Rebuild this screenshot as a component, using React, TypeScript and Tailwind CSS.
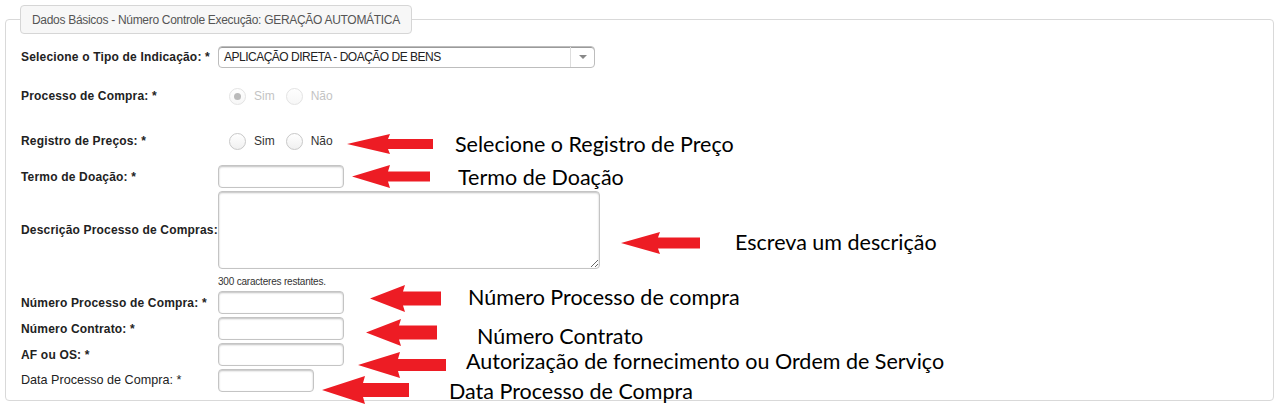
import React from 'react';

type ArrowProps = { className: string; w: number; h: number; head: number; shaft: number };

// red annotation arrow pointing left
function Arrow({ className, w, h, head, shaft }: ArrowProps) {
  const t = (h - shaft) / 2;
  const b = (h + shaft) / 2;
  const pts = `0,${h / 2} ${head},0 ${head - 2},${t} ${w},${t} ${w},${b} ${head - 2},${b} ${head},${h}`;
  return (
    <svg className={`absolute ${className}`} width={w} height={h} viewBox={`0 0 ${w} ${h}`}>
      <polygon points={pts} fill="#ed1c24" />
    </svg>
  );
}

function Radio({ checked, disabled, label }: { checked?: boolean; disabled?: boolean; label: string }) {
  return (
    <span className={`flex items-center ${disabled ? 'opacity-50' : ''}`}>
      <span className="flex h-[17px] w-[17px] items-center justify-center rounded-full border border-[#c8c8c8] bg-gradient-to-b from-white to-[#f0f0f0]">
        {checked && <span className="h-[7px] w-[7px] rounded-full bg-[#777]" />}
      </span>
      <span className={`ml-[8px] ${disabled ? 'text-[#888]' : 'text-[#333]'}`}>{label}</span>
    </span>
  );
}

function TextInput({ w = 'w-[126px]' }: { w?: string }) {
  return (
    <input
      type="text"
      className={`${w} h-[23px] rounded-[4px] border border-[#c4c4c4] bg-white shadow-[inset_0_1px_2px_rgba(0,0,0,0.25)] outline-none`}
    />
  );
}

function Label({ children, bold = true }: { children: React.ReactNode; bold?: boolean }) {
  return (
    <span
      className={`w-[197px] shrink-0 whitespace-nowrap text-[#222] ${
        bold ? 'font-bold tracking-[0.18px]' : 'text-[12.6px]'
      }`}
    >
      {children}
    </span>
  );
}

export default function App() {
  return (
    <div className="relative h-[412px] w-[1283px] bg-white font-['Liberation_Sans',Arial,sans-serif] text-[12px]">
      <div className="px-[5px] pt-[5px]">
        <fieldset className="w-[1269px] rounded-[4px] border border-[#d9d9d9] pb-[8px] pl-[15px] pr-[15px]">
          <legend className="ml-[-1px] h-[29px] rounded-[4px] border border-[#d6d6d6] bg-[#f7f7f7] px-[11px] leading-[29px] tracking-[-0.3px] text-[#555]">
            Dados Básicos - Número Controle Execução: GERAÇÃO AUTOMÁTICA
          </legend>

          <div className="mt-[12px] flex h-[22px] items-center">
            <Label>Selecione o Tipo de Indicação: *</Label>
            <div className="flex h-[22px] w-[377px] items-stretch rounded-[4px] border border-[#bdbdbd] bg-white shadow-[inset_0_1px_0_#9a9a9a]">
              <span className="flex-1 pl-[5px] leading-[21px] tracking-[-0.5px] text-[#222]">
                APLICAÇÃO DIRETA - DOAÇÃO DE BENS
              </span>
              <span className="flex w-[24px] items-center justify-center border-l border-[#ddd]">
                <span className="h-0 w-0 border-x-[4px] border-t-[4px] border-x-transparent border-t-[#888]" />
              </span>
            </div>
          </div>

          <div className="mt-[18px] flex h-[20px] items-center">
            <Label>Processo de Compra: *</Label>
            <div className="ml-[11px] flex items-center gap-[11px]">
              <Radio checked disabled label="Sim" />
              <Radio disabled label="Não" />
            </div>
          </div>

          <div className="mt-[25px] flex h-[20px] items-center">
            <Label>Registro de Preços: *</Label>
            <div className="ml-[11px] flex items-center gap-[11px]">
              <Radio label="Sim" />
              <Radio label="Não" />
            </div>
          </div>

          <div className="mt-[14px] flex h-[23px] items-center">
            <Label>Termo de Doação: *</Label>
            <TextInput />
          </div>

          <div className="mt-[3px] flex h-[78px] items-center">
            <Label>Descrição Processo de Compras:</Label>
            <textarea className="h-[78px] w-[382px] resize rounded-[4px] border border-[#c4c4c4] bg-white shadow-[inset_0_1px_2px_rgba(0,0,0,0.25)] outline-none" />
          </div>
          <div className="mt-[4px] flex h-[16px] items-center">
            <span className="w-[197px] shrink-0" />
            <span className="text-[10px] tracking-[-0.2px] text-[#333]">300 caracteres restantes.</span>
          </div>

          <div className="mt-[2px] flex h-[23px] items-center">
            <Label>Número Processo de Compra: *</Label>
            <TextInput />
          </div>
          <div className="mt-[3px] flex h-[23px] items-center">
            <Label>Número Contrato: *</Label>
            <TextInput />
          </div>
          <div className="mt-[3px] flex h-[23px] items-center">
            <Label>AF ou OS: *</Label>
            <TextInput />
          </div>
          <div className="mt-[3px] flex h-[23px] items-center">
            <Label bold={false}>Data Processo de Compra: *</Label>
            <TextInput w="w-[96px]" />
          </div>
        </fieldset>
      </div>

      {/* annotations */}
      <Arrow className="left-[347px] top-[134px]" w={86} h={20} head={43} shaft={10} />
      <Arrow className="left-[352px] top-[165px]" w={78} h={23} head={38} shaft={10} />
      <Arrow className="left-[621px] top-[232px]" w={79} h={22} head={39} shaft={11} />
      <Arrow className="left-[370px] top-[285px]" w={71} h={27} head={35} shaft={14} />
      <Arrow className="left-[366px] top-[319px]" w={71} h={27} head={35} shaft={14} />
      <Arrow className="left-[358px] top-[352px]" w={88} h={26} head={42} shaft={12} />
      <Arrow className="left-[322px] top-[376px]" w={87} h={28} head={43} shaft={14} />

      <div className="font-['Lato',sans-serif] text-[21.5px] leading-[22px] text-black">
        <span className="absolute left-[455px] top-[133px] whitespace-nowrap">Selecione o Registro de Preço</span>
        <span className="absolute left-[458px] top-[166px] whitespace-nowrap">Termo de Doação</span>
        <span className="absolute left-[735px] top-[231px] whitespace-nowrap">Escreva um descrição</span>
        <span className="absolute left-[468px] top-[286px] whitespace-nowrap">Número Processo de compra</span>
        <span className="absolute left-[477px] top-[325px] whitespace-nowrap">Número Contrato</span>
        <span className="absolute left-[466px] top-[350px] whitespace-nowrap">Autorização de fornecimento ou Ordem de Serviço</span>
        <span className="absolute left-[449px] top-[380px] whitespace-nowrap">Data Processo de Compra</span>
      </div>
    </div>
  );
}
